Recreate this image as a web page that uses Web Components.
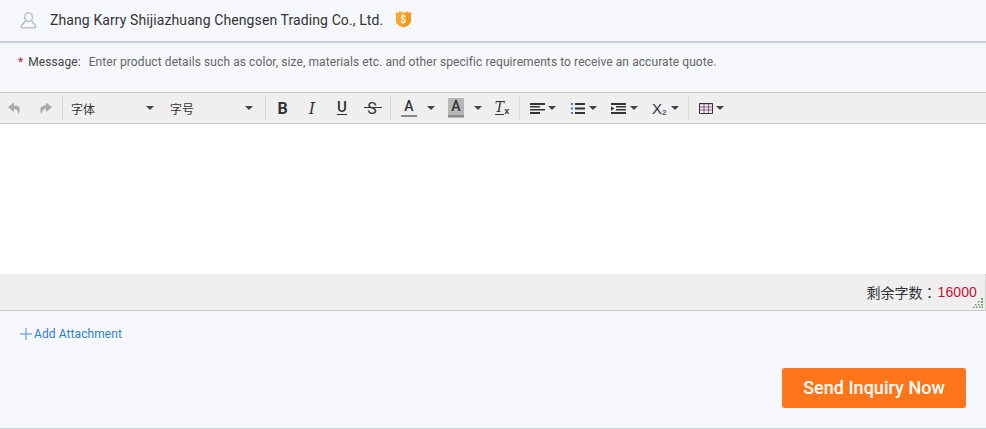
<!DOCTYPE html>
<html><head><meta charset="utf-8"><style>
html,body{margin:0;padding:0;background:#f5f7fb}
body{width:986px;height:429px;overflow:hidden;font-family:Roboto,"Noto Sans CJK SC",sans-serif}
</style></head><body>
<inquiry-form></inquiry-form>
<script>
class SupplierBar extends HTMLElement{constructor(){super();this.attachShadow({mode:'open'}).innerHTML=`<style>
:host{display:flex;align-items:center;height:41px;border-bottom:2px solid #c9cfe0;box-sizing:content-box;padding-left:20px;color:#333;font-size:14px;letter-spacing:.1px}
.u{width:17px;height:17px;margin-right:13px;margin-top:-1px}
.b{width:17px;height:18px;margin-left:12px;margin-top:-4px}
span{white-space:nowrap;margin-top:-2px}
</style>
<svg class="u" viewBox="0 0 17 17" fill="none" stroke="#b1b9cc" stroke-width="1.3"><ellipse cx="8.500" cy="5.200" rx="3.900" ry="4.300"/><path d="M5.500 9 L1.700 13.200 Q.6 15.800 2.600 15.800 H14.400 Q16.400 15.800 15.300 13.200 L11.500 9"/></svg>
<span><slot></slot></span>
<svg class="b" viewBox="0 0 17 18"><path d="M1 2 L3.600 3 L4.800 1 L7 3 L8.500 1.500 L10 3 L12.200 1 L13.400 3 L16 2 V12 Q14 16 8.500 17.500 Q3 16 1 12Z" fill="#f7a823"/><path d="M8.500 3 L13 3 L16 2 V12 Q14 16 8.500 17.500Z" fill="#ee8a1c" opacity=".55"/><text x="8.500" y="13" font-size="10" font-weight="700" text-anchor="middle" fill="#fff" font-family="Roboto">$</text></svg>`}}
customElements.define('supplier-bar',SupplierBar);

class MessageLabel extends HTMLElement{constructor(){super();this.attachShadow({mode:'open'}).innerHTML=`<style>
:host{display:flex;align-items:center;height:37px;padding-left:18px;font-size:12px;color:#666;white-space:nowrap;letter-spacing:.085px}
i{font-style:normal;color:#c8223c;margin-right:5px}
b{font-weight:400;color:#444;margin-right:8px}
</style><i>*</i><b>Message:</b><span><slot></slot></span>`}}
customElements.define('message-label',MessageLabel);

class ToolSep extends HTMLElement{constructor(){super();this.attachShadow({mode:'open'}).innerHTML=`<style>:host{display:block;width:1px;height:24px;background:#d8d8d8;flex:none}</style>`}}
customElements.define('tool-sep',ToolSep);

class ToolArrow extends HTMLElement{constructor(){super();this.attachShadow({mode:'open'}).innerHTML=`<style>:host{display:block;width:0;height:0;border:4px solid transparent;border-top:4px solid #444;border-bottom:0;flex:none}</style>`}}
customElements.define('tool-arrow',ToolArrow);

class ToolBtn extends HTMLElement{constructor(){super();this.attachShadow({mode:'open'}).innerHTML=`<style>
:host{display:flex;align-items:center;justify-content:center;height:24px;flex:none;color:#333;font:14px "Liberation Sans",sans-serif;position:relative}
</style><slot></slot>`}}
customElements.define('tool-btn',ToolBtn);

class EditorToolbar extends HTMLElement{constructor(){super();this.attachShadow({mode:'open'}).innerHTML=`<style>
:host{display:flex;align-items:center;height:30px;background:#efefef;border-top:1px solid #c8c8c8;border-bottom:1px solid #c8c8c8;font-size:12px;color:#333}
tool-btn{width:30px}
.lab{font:12px Roboto,"Noto Sans CJK SC",sans-serif;color:#333;width:83px;display:flex;align-items:center;justify-content:space-between;flex:none}
.t{font:700 16px Roboto,sans-serif;position:relative;line-height:16px}
svg{display:block}
.a{display:flex;flex-direction:column;align-items:center;width:16px;height:20px;font:500 14px Roboto,sans-serif;line-height:16px;flex:none}
.a::after{content:"";width:16px;height:2px;background:#888;margin-top:1px}
.hl{background:#b6b6b6}
.strike{position:absolute;left:7px;right:5px;top:11px;height:1px;background:#333}
</style>
<tool-btn><svg style="margin-top:1px" width="14" height="13" viewBox="0 0 14 12" fill="#aaa"><path d="M6 0 L0 4.800 L6 9.400 V6.400 Q10.200 6.200 10.400 12 Q14.500 3 6 3Z"/></svg></tool-btn>
<tool-btn><svg style="margin-top:1px" width="14" height="13" viewBox="0 0 14 12" fill="#aaa"><path d="M8 0 L14 4.800 L8 9.400 V6.400 Q3.800 6.200 3.600 12 Q-.5 3 8 3Z"/></svg></tool-btn>
<tool-sep style="margin-left:2px"></tool-sep>
<div class="lab" style="margin-left:8px"><span>字体</span><tool-arrow></tool-arrow></div>
<div class="lab" style="margin-left:16px"><span>字号</span><tool-arrow></tool-arrow></div>
<tool-sep style="margin-left:12px"></tool-sep>
<tool-btn style="margin-left:2px;width:29px"><span class="t" style="margin-top:1px">B</span></tool-btn>
<tool-btn><span class="t" style="font:italic 400 16px 'DejaVu Serif';line-height:16px;margin-top:1px">I</span></tool-btn>
<tool-btn><span class="t" style="font-weight:500;font-size:15px;border-bottom:1.5px solid #333;line-height:13px">U</span></tool-btn>
<tool-btn><span class="t" style="font-weight:400;font-size:16px;margin-top:1px">S</span><span class="strike"></span></tool-btn>
<tool-sep style="margin-left:3px"></tool-sep>
<span class="a" style="margin-left:10px">A</span>
<tool-arrow style="margin-left:10px"></tool-arrow>
<span class="a hl" style="margin-left:13px">A</span>
<tool-arrow style="margin-left:10px"></tool-arrow>
<tool-btn style="width:16px;margin-left:12px"><span style="font:italic 400 14px 'DejaVu Serif';border-bottom:1.5px solid #333;line-height:13px">T</span><span style="font:700 9px 'Liberation Sans';margin:6px 0 0 0">x</span></tool-btn>
<tool-sep style="margin-left:9px"></tool-sep>
<tool-btn style="width:15px;margin-left:10px"><svg width="15" height="11" viewBox="0 0 15 11" fill="#333"><path d="M0 0h15v2H0zM0 3h10v1.600H0zM0 6h15v1.600H0zM0 9h10v2H0z"/></svg></tool-btn>
<tool-arrow style="margin-left:3px"></tool-arrow>
<tool-btn style="width:14px;margin-left:15px"><svg width="14" height="11" viewBox="0 0 14 11"><path d="M4 0h10v2H4zM4 4.500h10v2H4zM4 9h10v2H4z" fill="#333"/><path d="M0 0h2v2H0zM0 4.500h2v2H0zM0 9h2v2H0z" fill="#3b7dd8"/></svg></tool-btn>
<tool-arrow style="margin-left:4px"></tool-arrow>
<tool-btn style="width:15px;margin-left:14px"><svg width="15" height="11" viewBox="0 0 15 11"><path d="M0 0h15v2H0zM5 3h10v1.600H5zM5 6h10v1.600H5zM0 9h15v2H0z" fill="#333"/><path d="M0 3.200 L3.400 5.500 L0 7.800Z" fill="#333"/></svg></tool-btn>
<tool-arrow style="margin-left:4px"></tool-arrow>
<tool-btn style="width:17px;margin-left:14px;justify-content:flex-start"><span style="font:15px 'Liberation Sans'">X</span><span style="font:700 8px 'Liberation Sans';margin:9px 0 0 0;color:#555">2</span></tool-btn>
<tool-arrow style="margin-left:2px"></tool-arrow>
<tool-sep style="margin-left:9px"></tool-sep>
<tool-btn style="width:14px;margin-left:10px"><svg width="14" height="11" viewBox="0 0 14 11" fill="none" stroke="#333"><path d="M.5.5h13v10H.5z"/><path d="M.5 4h13M.5 7h13M5 .5v10M9.500 .5v10" stroke="#7a3b6a" stroke-width=".8"/><path d="M.5.5h13" stroke-width="1.400"/></svg></tool-btn>
<tool-arrow style="margin-left:3px"></tool-arrow>`}}
customElements.define('editor-toolbar',EditorToolbar);

class WordCount extends HTMLElement{constructor(){super();this.attachShadow({mode:'open'}).innerHTML=`<style>
:host{display:flex;align-items:center;justify-content:flex-end;height:37px;background:#efefef;padding-right:8px;padding-bottom:1px;position:relative;border-bottom:1px solid #c8c8c8;border-right:1px solid #d8d8d8;font:14px "Noto Sans CJK TC",Roboto,sans-serif;color:#333;box-sizing:border-box}
span{margin-right:1px}
b{font:400 14px "Liberation Sans",sans-serif;color:#c8102e;letter-spacing:.1px}
svg{position:absolute;right:2px;bottom:2px}
</style><span>剩余字数：</span><b><slot></slot></b>
<svg width="10" height="10" viewBox="0 0 10 10" fill="#6f9a5a"><path d="M8 0h2v2H8zM5 3h1.500v1.500H5zM8 3h2v2H8zM2 6h1.500v1.500H2zM5 6h1.500v1.500H5zM8 6h2v1.500H8zM0 8.500h1.500V10H0zM3 8.500h1.500V10H3zM6 8.500h1.500V10H6zM8.500 8.500H10V10H8.500z"/></svg>`}}
customElements.define('word-count',WordCount);

class RichEditor extends HTMLElement{constructor(){super();this.attachShadow({mode:'open'}).innerHTML=`<style>
:host{display:block}
.body{height:150px;background:#fff}
</style><editor-toolbar></editor-toolbar><div class="body"></div><word-count>16000</word-count>`}}
customElements.define('rich-editor',RichEditor);

class AddAttachment extends HTMLElement{constructor(){super();this.attachShadow({mode:'open'}).innerHTML=`<style>
:host{display:flex;align-items:center;height:46px;padding-left:20px;font-size:12px;color:#2f7fc8;letter-spacing:.085px}
svg{margin-right:2px;margin-top:-1px}
</style><svg width="12" height="12" viewBox="0 0 12 12" stroke="#4a90d9" stroke-width="1"><path d="M6 0v12M0 6h12"/></svg><slot></slot>`}}
customElements.define('add-attachment',AddAttachment);

class SendButton extends HTMLElement{constructor(){super();this.attachShadow({mode:'open'}).innerHTML=`<style>
:host{display:flex;align-items:center;justify-content:center;width:184px;height:40px;padding-bottom:2px;box-sizing:border-box;background:#ff7519;border-radius:3px;color:#fff;font-size:18px;font-weight:500;letter-spacing:.03px}
</style><slot></slot>`}}
customElements.define('send-button',SendButton);

class InquiryForm extends HTMLElement{constructor(){super();this.attachShadow({mode:'open'}).innerHTML=`<style>
:host{display:block;height:429px;box-sizing:border-box;border-bottom:1px solid #c9cfe0}
.actions{display:flex;justify-content:flex-end;padding:11px 20px 0 0}
.gap{height:12px}
</style>
<supplier-bar>Zhang Karry Shijiazhuang Chengsen Trading Co., Ltd.</supplier-bar>
<message-label>Enter product details such as color, size, materials etc. and other specific requirements to receive an accurate quote.</message-label>
<div class="gap"></div>
<rich-editor></rich-editor>
<add-attachment>Add Attachment</add-attachment>
<div class="actions"><send-button>Send Inquiry Now</send-button></div>`}}
customElements.define('inquiry-form',InquiryForm);
</script></body></html>
